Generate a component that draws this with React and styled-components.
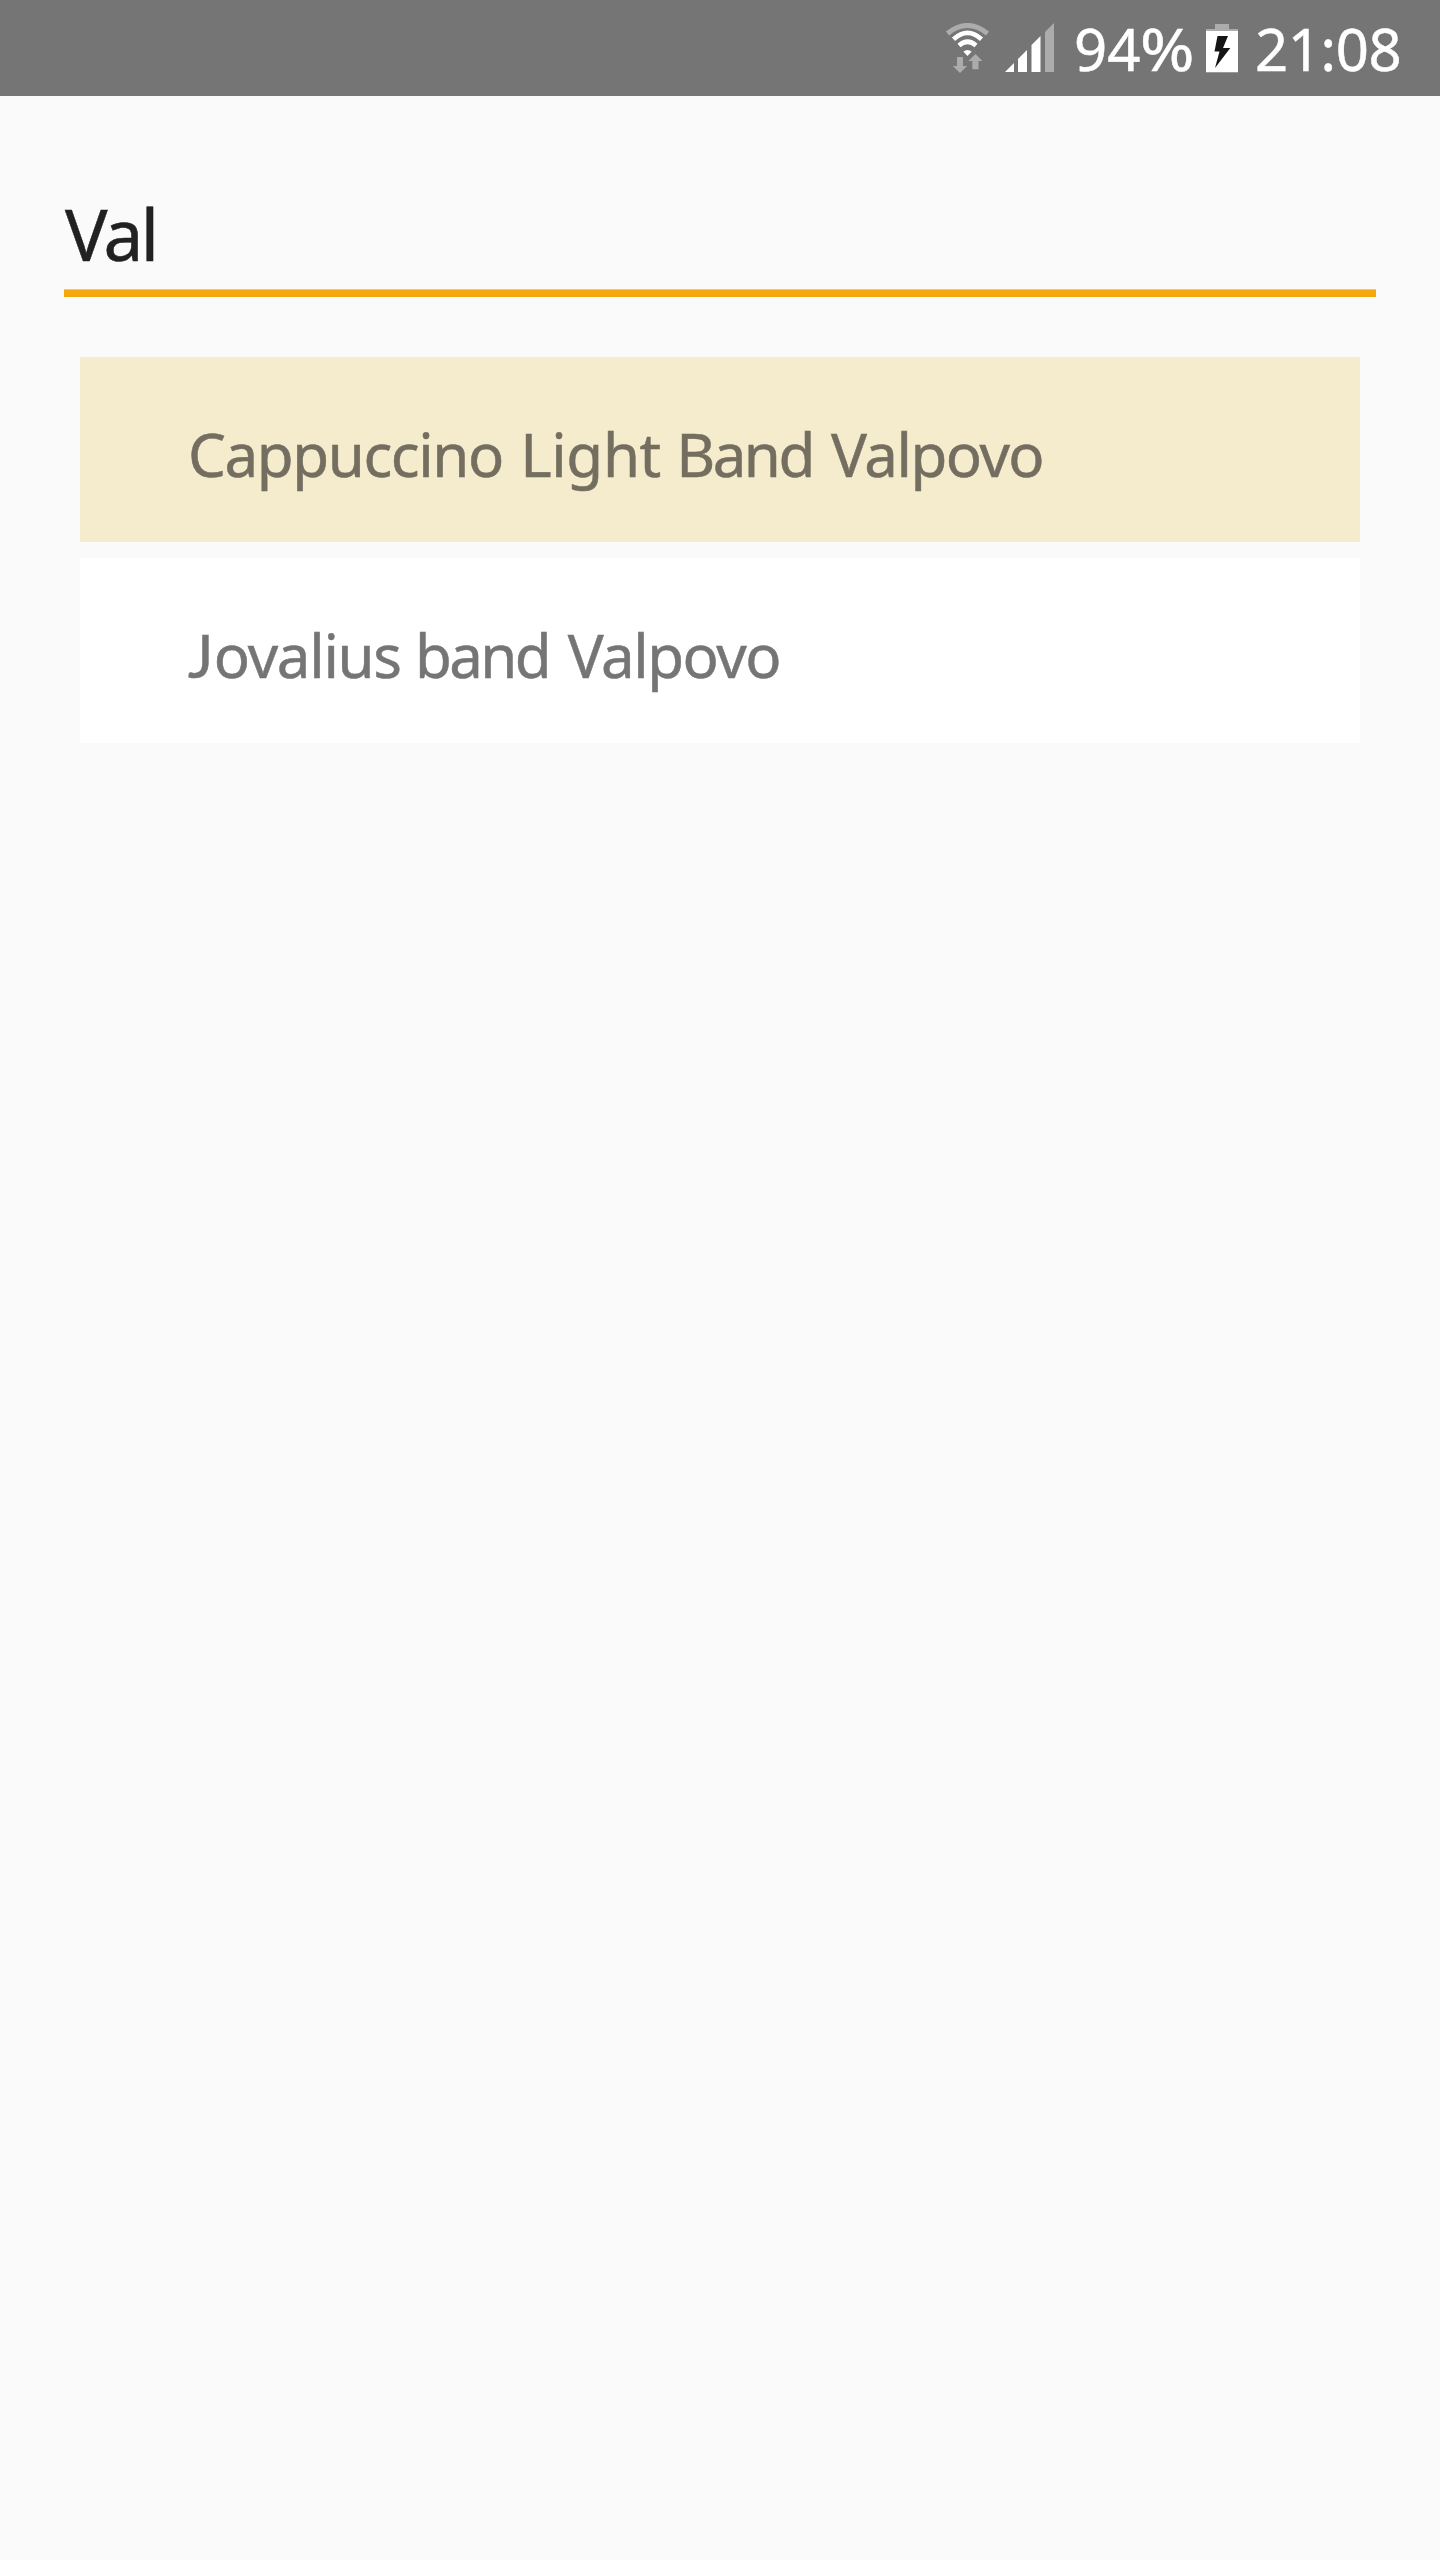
import React from "react";
import styled, { createGlobalStyle } from "styled-components";

const GlobalStyle = createGlobalStyle`
  body {
    margin: 0;
    background: #fafafa;
    font-family: "Noto Sans", "Open Sans", sans-serif;
  }
`;

const Screen = styled.div`
  display: flex;
  flex-direction: column;
  width: 1440px;
  min-height: 2560px;
  background: #fafafa;
`;

const StatusBar = styled.header`
  display: flex;
  align-items: center;
  justify-content: flex-end;
  box-sizing: border-box;
  height: 96px;
  padding-right: 38px;
  background: #757575;
  color: #fff;
`;

const StatusIcon = styled.svg`
  flex: none;
  width: ${(p) => p.$width}px;
  height: 50px;
  margin-right: ${(p) => p.$gap}px;
`;

const StatusText = styled.span`
  flex: none;
  width: ${(p) => p.$width}px;
  padding-top: 2px;
  font-size: 58px;
  line-height: 94px;
  letter-spacing: ${(p) => p.$tracking || 0}px;
  white-space: nowrap;
  -webkit-text-stroke: 0.5px currentColor;
`;

const Percent = styled.span`
  display: inline-block;
  transform: scaleX(1.13);
  transform-origin: left;
`;

const Content = styled.main`
  display: flex;
  flex-direction: column;
  padding: 90px 64px 0;
`;

const SearchField = styled.div`
  box-sizing: border-box;
  height: 111px;
  padding: 0 0 7px 1px;
  border-bottom: 7px solid #f4a80c;
  box-shadow: inset 0 -1px #f6c66a;
  color: #212121;
  font-size: 71px;
  line-height: 96px;
  letter-spacing: -2.6px;
  -webkit-text-stroke: 0.5px currentColor;
`;

const Results = styled.ul`
  display: flex;
  flex-direction: column;
  gap: 16px;
  margin: 60px 16px 0;
  padding: 0;
  list-style: none;
`;

const Result = styled.li`
  box-sizing: border-box;
  height: 185px;
  padding: 5px 0 0 108px;
  background: ${(p) => (p.$highlighted ? "#f5ebcd" : "#ffffff")};
  color: ${(p) => (p.$highlighted ? "#736e60" : "#757575")};
  font-size: 60px;
  line-height: 185px;
  white-space: nowrap;
  -webkit-text-stroke: 0.5px currentColor;
`;

const Word = styled.span`
  letter-spacing: ${(p) => p.$tracking}px;
  word-spacing: ${(p) => p.$space || 0}px;
`;

const Initial = styled.span`
  font-family: Lato, sans-serif;
  line-height: 1;
  letter-spacing: 0.5px;
`;

const WifiIcon = () => (
  <StatusIcon $width={44} $gap={16} viewBox="0 0 44 50" fill="none">
    <path d="M2.500 10.500Q22.500 -5.500 42.500 10.500" stroke="#acacac" strokeWidth="5" />
    <path d="M8.500 16.200Q22.500 3.600 36.500 16.200" stroke="#fff" strokeWidth="4.600" />
    <path d="M14 22.500Q22.500 15 31 22.500" stroke="#fff" strokeWidth="4.600" />
    <path d="M18.300 28.500Q22.500 25.500 26.700 28.500L22.500 33Z" fill="#fff" />
    <path d="M12 34h6v9h4L15 50L7.800 43H12Z" fill="#acacac" />
    <path d="M30.500 31L37.500 38H33.500V46.300H27.300V38H23.300Z" fill="#acacac" />
  </StatusIcon>
);

const SignalIcon = () => (
  <StatusIcon $width={50} $gap={19} viewBox="0 0 50 50">
    <path d="M0 49L9 40V49Z" fill="#fff" />
    <path d="M13 49V36L22 27V49Z" fill="#fff" />
    <path d="M26.500 49V22L35.500 13V49Z" fill="#fff" />
    <path d="M40 49V9L49 0V49Z" fill="#acacac" />
  </StatusIcon>
);

const BatteryIcon = () => (
  <StatusIcon $width={32} $gap={17} viewBox="0 0 32 50">
    <path d="M9 1H23V6H32V8H0V6H9Z" fill="#acacac" />
    <rect y="8" width="32" height="41" fill="#fff" />
    <rect y="49" width="32" height="1" fill="#999" />
    <path d="M11.500 13H22L17 25H24.300L9 45L13.500 28.500H8.500Z" fill="#151515" />
  </StatusIcon>
);

export default function App() {
  return (
    <Screen>
      <GlobalStyle />
      <StatusBar>
        <WifiIcon />
        <SignalIcon />
        <StatusText $width={132}>
          94<Percent>%</Percent>
        </StatusText>
        <BatteryIcon />
        <StatusText $width={147} $tracking={-0.4}>21:08</StatusText>
      </StatusBar>
      <Content>
        <SearchField>Val</SearchField>
        <Results>
          <Result $highlighted>
            <Word $tracking={-1.4} $space={3}>Cappuccino </Word>
            <Word $tracking={-0.35}>Light </Word>
            <Word $tracking={-2.5} $space={5}>Band </Word>
            <Word $tracking={-1.5}>Valpovo</Word>
          </Result>
          <Result>
            <Initial>J</Initial>
            <Word $tracking={-1.3}>ovalius </Word>
            <Word $tracking={-2.7} $space={6}>band </Word>
            <Word $tracking={-1.5}>Valpovo</Word>
          </Result>
        </Results>
      </Content>
    </Screen>
  );
}
